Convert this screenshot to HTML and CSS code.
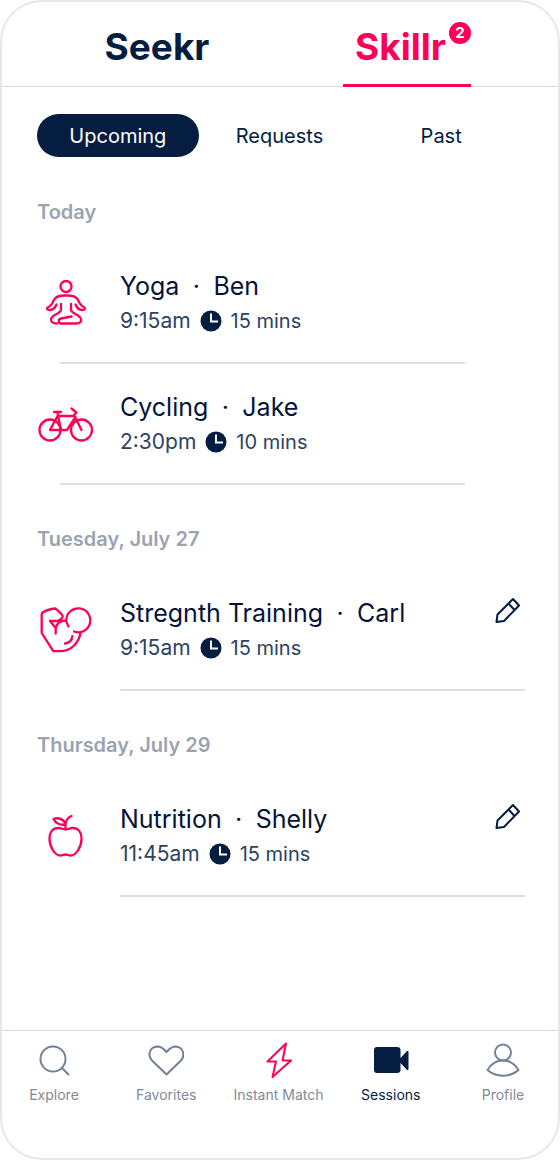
FILE: index.html
```html
<!DOCTYPE html>
<html lang="en">
<head>
<meta charset="utf-8">
<meta name="viewport" content="width=device-width, initial-scale=1">
<title>Skillr sessions</title>
<link rel="stylesheet" href="styles.css">
</head>
<body>
<svg class="sprite" aria-hidden="true">
  <symbol id="clock" viewBox="0 0 22 22"><circle cx="11" cy="11" r="10.500" fill="#051d40"/><path d="M11 3.500V11.500H18" fill="none" stroke="#fff" stroke-width="2"/></symbol>
  <symbol id="pencil" viewBox="0 0 26 26"><path d="M1.500 25 2.500 17.500 18 2 24 8.500 9 24ZM13.500 6.500 19.500 13" fill="none" stroke="#051d40" stroke-width="2" stroke-linejoin="round"/></symbol>
</svg>
<div class="app">
  <header class="brands">
    <button class="brand" type="button">Seekr</button>
    <button class="brand brand-active" type="button"><span class="brand-name">Skillr<span class="badge">2</span></span></button>
  </header>
  <main class="content">
    <nav class="filters" aria-label="Session filter">
      <button class="filter filter-active" type="button">Upcoming</button>
      <button class="filter" type="button">Requests</button>
      <button class="filter" type="button">Past</button>
    </nav>

    <section class="day">
      <h2 class="date">Today</h2>
      <article class="session session-short">
        <svg class="activity" viewBox="0 0 56 56"><g transform="translate(9 5)"><circle cx="20" cy="6.500" r="5.500"/><path d="M15 24V30C14 34 6 34.500 5 39C4.500 42 7 43.500 11 43.500M25 24V30C26 34 34 34.500 35 39C36 42 33 43.500 30 43.500H15C12 43.500 12 39 15 38.500L25.500 36.500M10.500 24.500C8.500 29 5.500 31 1.500 29.500C.5 28.500 1 27.500 2.500 27C6 26 7 21 9 18.500C12 15 16 15.500 20 15.500S28 15 31 18.500C33 21 34 26 37.500 27C39 27.500 39.500 28.500 38.500 29.500C34.500 31 31.500 29 29.500 24.500"/></g></svg>
        <div class="details">
          <h3 class="title"><span>Yoga</span><span class="dot">·</span><span>Ben</span></h3>
          <p class="meta"><time class="time">9:15am</time><svg class="clock"><use href="#clock"/></svg><span>15 mins</span></p>
        </div>
      </article>
      <article class="session session-short">
        <svg class="activity" viewBox="0 0 56 56"><g transform="translate(0 1)"><circle cx="13" cy="33" r="10.500"/><circle cx="44.500" cy="33" r="10.500"/><path d="M13 33 20.500 19H37.500M17 15H24M20.500 16 24 33H13M24 33H30L38.500 20M44.500 33 37 18 39.500 15.500 34.500 11.500"/></g></svg>
        <div class="details">
          <h3 class="title"><span>Cycling</span><span class="dot">·</span><span>Jake</span></h3>
          <p class="meta"><time class="time">2:30pm</time><svg class="clock"><use href="#clock"/></svg><span>10 mins</span></p>
        </div>
      </article>
    </section>

    <section class="day">
      <h2 class="date">Tuesday, July 27</h2>
      <article class="session">
        <svg class="activity" viewBox="0 0 56 56"><path d="M18.700 31.500V26C19.500 22 23 18.500 28.500 18.500M18.700 26 13 19H21C22 18 23.500 17.500 24.700 16.500 25.700 15.500 26 14.500 25.500 13.500 24 11 21 9 18.500 6.500 14 7 8.500 8.500 5.500 10.500Q4.700 11 4.700 12.500V31L16.300 49.200H24.700C34 48.500 42 41 43.500 30.500M28 41.500C32.500 41 35 38 35.300 34.200M31.500 24.500C30 22 29.300 20 29.300 18.200A12 12 0 1 1 37 29.500"/></svg>
        <div class="details">
          <h3 class="title"><span>Stregnth Training</span><span class="dot">·</span><span>Carl</span></h3>
          <p class="meta"><time class="time">9:15am</time><svg class="clock"><use href="#clock"/></svg><span>15 mins</span></p>
        </div>
        <button class="edit" type="button" aria-label="Edit strength training"><svg class="pencil"><use href="#pencil"/></svg></button>
      </article>
    </section>

    <section class="day">
      <h2 class="date">Thursday, July 29</h2>
      <article class="session">
        <svg class="activity" viewBox="0 0 56 56"><path transform="translate(0 1)" d="M28.500 20.500C25.500 20.500 24.500 19 21.500 19 15.500 19 12.500 23.500 12.500 29.500 12.500 37.500 17.500 46.500 23.500 46.500 25.500 46.500 26.500 45.500 28.500 45.500S31.500 46.500 33.500 46.500C39.500 46.500 44.500 37.500 44.500 29.500 44.500 23.500 41.500 19 35.500 19 32.500 19 31.500 20.500 28.500 20.500V15.500C28.500 11.500 31.500 8 34.500 7M28.500 15.500C23.500 16.500 18.500 14.500 16.500 10 21.500 8 27.500 10.500 28.500 15.500"/></svg>
        <div class="details">
          <h3 class="title"><span>Nutrition</span><span class="dot">·</span><span>Shelly</span></h3>
          <p class="meta"><time class="time">11:45am</time><svg class="clock"><use href="#clock"/></svg><span>15 mins</span></p>
        </div>
        <button class="edit" type="button" aria-label="Edit nutrition"><svg class="pencil"><use href="#pencil"/></svg></button>
      </article>
    </section>
  </main>
  <nav class="tabbar" aria-label="Main">
    <a class="tab" href="#explore"><svg class="tab-icon" viewBox="0 0 36 36"><circle cx="17" cy="17" r="12.500"/><path d="M26 26 32.500 32.500"/></svg>Explore</a>
    <a class="tab" href="#favorites"><svg class="tab-icon" viewBox="0 0 36 36"><path d="M18.500 32.500 4 18.500C-.5 14 1 5 9.500 4.500 13.500 4.500 15.500 6.500 18.500 10 21.500 6.500 23.500 4.500 27.500 4.500 36 5 37 14 33 18.500Z"/></svg>Favorites</a>
    <a class="tab" href="#match"><svg class="tab-icon bolt" viewBox="0 0 36 36"><path d="M25 1.500 6.500 19.500H15L11.500 35 30 18.500H21.500Z"/></svg>Instant Match</a>
    <a class="tab tab-active" href="#sessions" aria-current="page"><svg class="tab-icon camera" viewBox="0 0 36 36"><path d="M4 5H24Q27.500 5 27.500 8V16L34 9Q35.500 8.500 35.500 10V27Q35.500 28.500 34 28L27.500 21V28Q27.500 31 24 31H4Q1 31 1 28V8Q1 5 4 5Z"/></svg>Sessions</a>
    <a class="tab" href="#profile"><svg class="tab-icon" viewBox="0 0 36 36"><circle cx="18" cy="10.500" r="8"/><path d="M2.500 28C6 22 11 18.500 18 18.500S30 22 33.500 28C25 35.500 11 35.500 2.500 28Z"/></svg>Profile</a>
  </nav>
</div>
</body>
</html>
```
FILE: styles.css
```css
* { box-sizing: border-box; }
body { margin: 0; background: #fff; color: #051d40; font-family: Inter, sans-serif; }
button { padding: 0; border: 0; background: none; color: inherit; font: inherit; cursor: pointer; }
h2, h3, p { margin: 0; font-weight: 400; }
svg { display: block; flex: none; }
.sprite { position: absolute; width: 0; height: 0; }

.app { display: flex; flex-direction: column; min-height: 100vh; border: 2px solid #e6e8e9; border-radius: 42px; overflow: hidden; }

.brands { display: grid; grid-template-columns: 1fr 1fr; justify-items: center; padding: 0 26px 0 30px; border-bottom: 1px solid #d3dce1; }
.brand { height: 85px; padding: 8px 12px 0; margin-bottom: -1px; border-bottom: 3px solid transparent; font-size: 37px; font-weight: 700; line-height: 48px; }
.brand-active { min-width: 127px; padding-right: 25px; border-color: #ff0058; color: #ff0058; }
.brand-name { position: relative; }
.badge { position: absolute; top: -2px; right: -25px; width: 22px; height: 22px; border-radius: 50%; background: #ff0058; color: #fff; font-size: 15px; font-weight: 700; line-height: 22px; text-align: center; }

.content { flex: 1; padding: 27px 33px 0 35px; }
.filters { display: grid; grid-template-columns: repeat(3, 1fr); margin: 0 3px 1px 0; }
.filter { height: 43px; border-radius: 22px; font-size: 20px; }
.filter-active { background: #051d40; color: #fff; }

.day { padding-top: 40px; }
.date { color: #9aa4b0; font-size: 20px; font-weight: 600; line-height: 28px; }
.session { display: flex; align-items: flex-start; position: relative; padding: 44px 4px 29px 0; }
.session::after { content: ""; position: absolute; right: 0; bottom: 0; left: 83px; height: 2px; background: #dbe0e4; }
.session + .session { padding-top: 27px; }
.session-short::after { right: 60px; left: 23px; }
.activity { width: 56px; height: 56px; margin: 5px 27px 0 0; fill: none; stroke: #ff0058; stroke-width: 2.3; stroke-linecap: round; stroke-linejoin: round; }
.details { flex: 1; }
.title { display: flex; color: #05143a; font-size: 25px; line-height: 32px; }
.dot { width: 34px; text-align: center; }
.meta { display: flex; align-items: center; gap: 9px; margin-top: 5px; color: #2d4362; font-size: 20px; line-height: 28px; }
.time { font-size: 21px; }
.clock { width: 22px; height: 22px; }
.pencil { width: 26px; height: 26px; }

.tabbar { display: flex; justify-content: space-between; padding: 11px 5px 53px 2px; border-top: 1px solid #d3dce1; }
.tab { display: flex; flex-direction: column; align-items: center; gap: 7px; width: 100px; color: #7f8b9a; font-size: 14px; line-height: 20px; text-decoration: none; white-space: nowrap; }
.tab-active { color: #051d40; }
.tab-icon { width: 36px; height: 36px; fill: none; stroke: #718196; stroke-width: 2; stroke-linecap: round; stroke-linejoin: round; }
.bolt { stroke: #ff0058; }
.camera { fill: #051d40; stroke: none; }
```
